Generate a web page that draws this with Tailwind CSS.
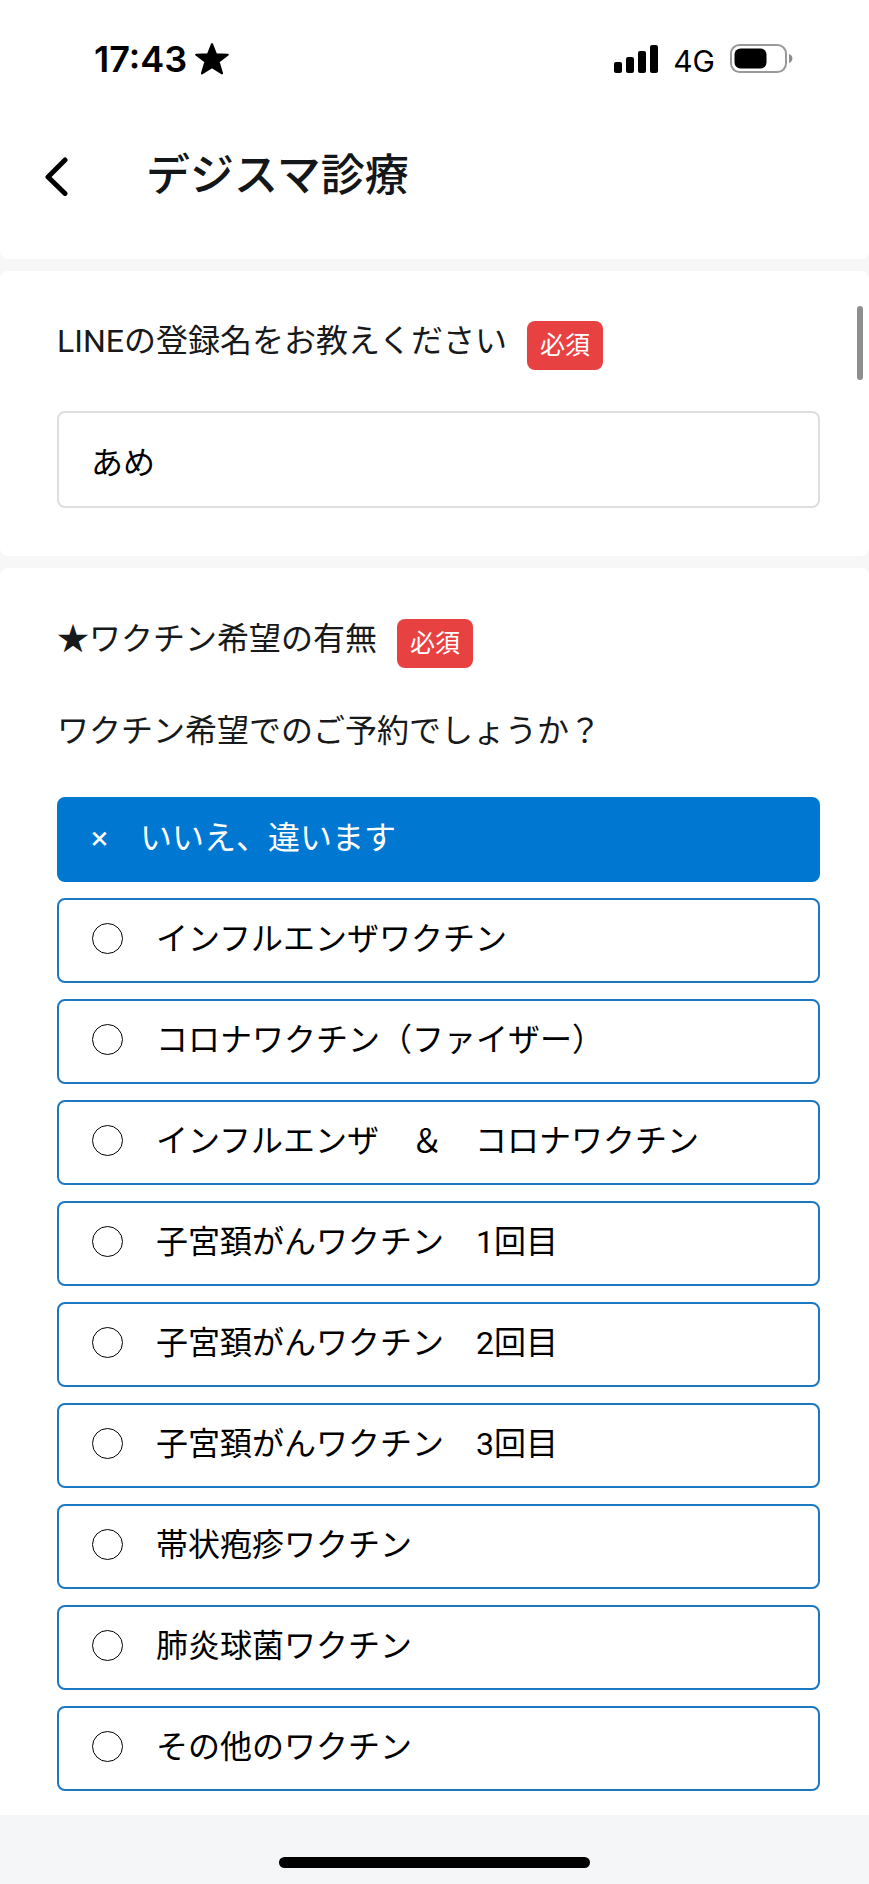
<!DOCTYPE html>
<html lang="ja">
<head>
  <meta charset="UTF-8">
  <meta name="viewport" content="width=device-width, initial-scale=1.0">
  <title>デジスマ診療</title>
  <script src="https://cdn.jsdelivr.net/npm/@tailwindcss/browser@4"></script>
</head>
<body class="min-h-screen flex flex-col bg-[#f7f7f7] font-[Roboto,'Noto_Sans_CJK_JP',sans-serif] text-[32px] leading-[48px] text-[#17191b]">

  <!-- ヘッダー -->
  <header class="bg-white rounded-b-lg pb-14">
    <div class="flex items-center justify-between h-[118px] pl-[94px] pr-[76px] text-black font-[Inter,sans-serif]">
      <div class="flex items-center gap-2">
        <span class="text-[36px] font-semibold">17:43</span>
        <svg class="w-[34px] h-[34px]" viewBox="0 0 32 32" stroke="black" stroke-width="2" stroke-linejoin="round"><path d="M16 2 L19.7 11.5 L30.8 12 L22.2 18.6 L25.4 29.5 L16 23.6 L6.6 29.5 L9.8 18.6 L1.2 12 L12.3 11.5Z"/></svg>
      </div>
      <div class="flex items-center gap-[14px]">
        <svg class="w-[45px] h-7" viewBox="0 0 45 28">
          <rect x="0" y="17" width="8" height="11" rx="2"/>
          <rect x="12" y="12" width="8" height="16" rx="2"/>
          <rect x="24" y="6" width="8" height="22" rx="2"/>
          <rect x="36" y="0" width="8" height="28" rx="2"/>
        </svg>
        <span class="text-[30px] leading-[30px] pt-1">4G</span>
        <svg class="w-16 h-[30px]" viewBox="0 0 64 30">
          <rect x="2" y="1" width="55" height="27" rx="8.5" fill="none" stroke="#999" stroke-width="2"/>
          <rect x="5.500" y="4.500" width="32" height="20" rx="6"/>
          <path d="M60 10 C64.500 11 64.500 18 60 19Z" fill="#8c8c8c"/>
        </svg>
      </div>
    </div>
    <div class="flex items-center h-[85px] pt-[30px] pl-11 gap-[77px]">
      <button type="button" aria-label="戻る">
        <svg class="w-[25px] h-10" viewBox="0 0 25 40" fill="none" stroke="black" stroke-width="5" stroke-linecap="round" stroke-linejoin="round"><path d="M21 4 L4 21 L21 37.500"/></svg>
      </button>
      <h1 class="text-[44px] leading-[56px] font-medium text-[#14171a]">デジスマ診療</h1>
    </div>
  </header>

  <main class="flex flex-col gap-3 pt-3 grow">
    <!-- LINE登録名 -->
    <section class="bg-white rounded-lg pl-[57px] pr-[49px] pt-[46px] pb-12">
      <div class="flex items-start gap-5">
        <label for="lineName">LINEの登録名をお教えください</label>
        <span class="mt-1 rounded-lg bg-[#e84142] text-white text-[25px] leading-[49px] px-[13px]">必須</span>
      </div>
      <input id="lineName" type="text" value="あめ" class="mt-[41px] w-full h-[97px] rounded-lg border-2 border-[#dedede] bg-white px-8 text-black">
    </section>

    <!-- ワクチン希望 -->
    <section class="bg-white rounded-t-lg pl-[57px] pr-[49px] pt-[47px] pb-6">
      <div class="flex items-start gap-5">
        <h2>★ワクチン希望の有無</h2>
        <span class="mt-1 rounded-lg bg-[#e84142] text-white text-[25px] leading-[49px] px-[13px]">必須</span>
      </div>
      <p class="mt-[39px]">ワクチン希望でのご予約でしょうか？</p>

      <div class="mt-[42px] flex flex-col gap-4 text-black" role="radiogroup" aria-label="ワクチン希望の有無">
        <label class="flex items-center h-[85px] pb-1 px-8 rounded-lg border-2 border-[#0078d2] bg-[#0078d2] text-white">
          <input type="radio" name="vaccine" class="sr-only" checked>
          <span>×　いいえ、違います</span>
        </label>
        <label class="flex items-center gap-[33px] h-[85px] pb-1 px-[33px] rounded-lg border-2 border-[#1c78c0]">
          <input type="radio" name="vaccine" class="appearance-none w-[31px] h-[31px] rounded-full border border-black">
          <span>インフルエンザワクチン</span>
        </label>
        <label class="flex items-center gap-[33px] h-[85px] pb-1 px-[33px] rounded-lg border-2 border-[#1c78c0]">
          <input type="radio" name="vaccine" class="appearance-none w-[31px] h-[31px] rounded-full border border-black">
          <span>コロナワクチン（ファイザー）</span>
        </label>
        <label class="flex items-center gap-[33px] h-[85px] pb-1 px-[33px] rounded-lg border-2 border-[#1c78c0]">
          <input type="radio" name="vaccine" class="appearance-none w-[31px] h-[31px] rounded-full border border-black">
          <span>インフルエンザ　＆　コロナワクチン</span>
        </label>
        <label class="flex items-center gap-[33px] h-[85px] pb-1 px-[33px] rounded-lg border-2 border-[#1c78c0]">
          <input type="radio" name="vaccine" class="appearance-none w-[31px] h-[31px] rounded-full border border-black">
          <span>子宮頚がんワクチン　1回目</span>
        </label>
        <label class="flex items-center gap-[33px] h-[85px] pb-1 px-[33px] rounded-lg border-2 border-[#1c78c0]">
          <input type="radio" name="vaccine" class="appearance-none w-[31px] h-[31px] rounded-full border border-black">
          <span>子宮頚がんワクチン　2回目</span>
        </label>
        <label class="flex items-center gap-[33px] h-[85px] pb-1 px-[33px] rounded-lg border-2 border-[#1c78c0]">
          <input type="radio" name="vaccine" class="appearance-none w-[31px] h-[31px] rounded-full border border-black">
          <span>子宮頚がんワクチン　3回目</span>
        </label>
        <label class="flex items-center gap-[33px] h-[85px] pb-1 px-[33px] rounded-lg border-2 border-[#1c78c0]">
          <input type="radio" name="vaccine" class="appearance-none w-[31px] h-[31px] rounded-full border border-black">
          <span>帯状疱疹ワクチン</span>
        </label>
        <label class="flex items-center gap-[33px] h-[85px] pb-1 px-[33px] rounded-lg border-2 border-[#1c78c0]">
          <input type="radio" name="vaccine" class="appearance-none w-[31px] h-[31px] rounded-full border border-black">
          <span>肺炎球菌ワクチン</span>
        </label>
        <label class="flex items-center gap-[33px] h-[85px] pb-1 px-[33px] rounded-lg border-2 border-[#1c78c0]">
          <input type="radio" name="vaccine" class="appearance-none w-[31px] h-[31px] rounded-full border border-black">
          <span>その他のワクチン</span>
        </label>
      </div>
    </section>
  </main>

  <!-- ホームインジケーター -->
  <footer class="flex justify-center items-end h-[68px] pb-4 bg-[#f5f6f8]">
    <div class="w-[311px] h-[11px] rounded-full bg-black"></div>
  </footer>

  <!-- スクロールバー -->
  <div class="absolute right-[6px] top-[306px] w-[6px] h-[74px] rounded-full bg-[#8e8e8e]"></div>
</body>
</html>
